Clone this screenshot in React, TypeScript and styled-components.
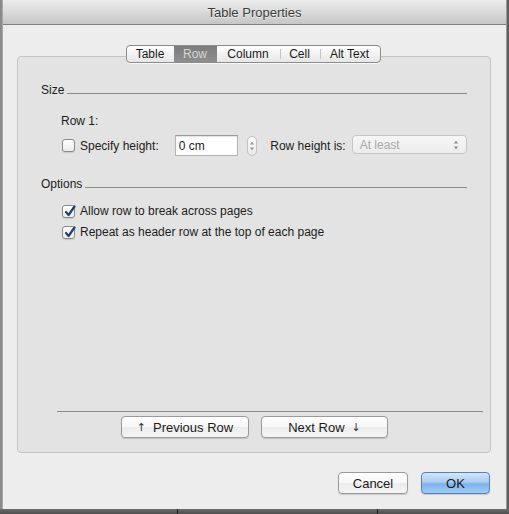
import React from 'react'
import styled, { createGlobalStyle } from 'styled-components'

const GlobalStyle = createGlobalStyle`
  html, body {
    margin: 0;
    padding: 0;
    background: #5e5e5e;
  }
  body {
    font-family: "Liberation Sans", Arial, sans-serif;
    font-size: 12px;
    color: #1c1c1c;
  }
`

const Page = styled.div`
  width: 509px;
  height: 514px;
  display: flex;
  flex-direction: column;
  overflow: hidden;
  background: linear-gradient(to right, #8a8a8a 0 2px, #5e5e5e 2px);
`

const Window = styled.div`
  height: 509px;
  margin: 0 2px 0 2px;
  box-sizing: border-box;
  border-left: 1px solid #a8a8a8;
  border-right: 1px solid #9a9a9a;
  background: #ededed;
  display: flex;
  flex-direction: column;
`

const TitleBar = styled.div`
  height: 24px;
  flex: none;
  border-bottom: 1px solid #7e7e7e;
  border-top-left-radius: 4px;
  border-top-right-radius: 4px;
  background: linear-gradient(#ececec, #d8d8d8 55%, #c6c6c6);
  display: flex;
  align-items: center;
  justify-content: center;
  font-size: 13px;
  color: #3c3c3c;
  text-shadow: 0 1px 0 rgba(255, 255, 255, 0.6);
`

const BottomStrip = styled.div`
  flex: 1;
  background:
    linear-gradient(to right, transparent 177px, #1e1e1e 177px, #1e1e1e 178px, transparent 178px,
      transparent 377px, #1e1e1e 377px, #1e1e1e 378px, transparent 378px),
    linear-gradient(#6c6c6c, #4e4e4e);
`

const Body = styled.div`
  flex: 1;
  display: flex;
  flex-direction: column;
  padding: 0 15px 0 14px;
`

const TabBar = styled.div`
  align-self: center;
  margin-top: 20px;
  margin-bottom: -7px;
  margin-right: 2px;
  position: relative;
  z-index: 1;
  display: flex;
  height: 18px;
  box-sizing: border-box;
  border: 1px solid #8c8c8c;
  border-radius: 4px;
  background: linear-gradient(#ffffff, #f0f0f0 60%, #e6e6e6);
  overflow: hidden;
  box-shadow: 0 1px 0 rgba(255, 255, 255, 0.7);
`

const Tab = styled.div<{ $w: number; $active?: boolean; $first?: boolean }>`
  width: ${(p) => p.$w}px;
  display: flex;
  align-items: center;
  justify-content: center;
  font-size: 12px;
  color: ${(p) => (p.$active ? '#d6d6d6' : '#1a1a1a')};
  background: ${(p) => (p.$active ? 'linear-gradient(#7c7c7c, #8e8e8e)' : 'transparent')};
  position: relative;
  &::before {
    content: '';
    display: ${(p) => (p.$first || p.$active ? 'none' : 'block')};
    position: absolute;
    left: 0;
    top: 3px;
    bottom: 3px;
    width: 1px;
    background: #c4c4c4;
  }
`

const Panel = styled.div`
  height: 397px;
  box-sizing: border-box;
  border: 1px solid #c4c4c4;
  border-radius: 4px;
  background: #e3e3e3;
  display: flex;
  flex-direction: column;
  padding-top: 26px;
`

const Content = styled.div`
  flex: 1;
  display: flex;
  flex-direction: column;
  padding: 0 23px;
`

const SectionHeader = styled.div<{ $gap?: number }>`
  display: flex;
  align-items: flex-end;
  height: 14px;
  margin-top: ${(p) => p.$gap || 0}px;
  line-height: 14px;
`

const SectionRule = styled.div`
  flex: 1;
  height: 1px;
  background: #8a8a8a;
  margin: 0 0 3px 3px;
`

const Indented = styled.div<{ $top: number }>`
  margin-left: 20px;
  margin-top: ${(p) => p.$top}px;
  display: flex;
  align-items: center;
  line-height: 14px;
`

const CheckRow = styled(Indented)`
  height: 16px;
`

const FormRow = styled(Indented)`
  height: 21px;
`

const Box = styled.span`
  position: relative;
  width: 13px;
  height: 13px;
  box-sizing: border-box;
  flex: none;
  border: 1px solid #8a8a8a;
  border-radius: 3px;
  background: linear-gradient(#ffffff, #ececec);
  box-shadow: 0 1px 1px rgba(0, 0, 0, 0.12);
  margin-left: 1px;
  margin-right: 5px;
  svg {
    position: absolute;
    left: 0;
    top: -3px;
  }
`

const Label = styled.span`
  white-space: nowrap;
`

const TextField = styled.div`
  width: 64px;
  height: 21px;
  box-sizing: border-box;
  margin-left: 16px;
  border: 1px solid #b4b4b4;
  border-top-color: #9c9c9c;
  background: #ffffff;
  box-shadow: inset 0 1px 1px rgba(0, 0, 0, 0.12);
  padding-left: 3px;
  display: flex;
  align-items: center;
`

const Stepper = styled.div`
  width: 10px;
  height: 20px;
  box-sizing: border-box;
  margin-left: 9px;
  border: 1px solid #c2c2c2;
  border-radius: 5px;
  background: linear-gradient(#fafafa, #eaeaea);
  display: flex;
  align-items: center;
  justify-content: center;
`

const SideLabel = styled.span`
  margin-left: 13px;
  margin-right: 6px;
  white-space: nowrap;
`

const Select = styled.div`
  width: 116px;
  height: 19px;
  box-sizing: border-box;
  margin-top: -2px;
  border: 1px solid #c6c6c6;
  border-radius: 4px;
  background: linear-gradient(#f6f6f6, #ececec);
  color: #a8a8a8;
  padding: 0 7px 0 7px;
  display: flex;
  align-items: center;
  justify-content: space-between;
`

const Footer = styled.div`
  display: flex;
  flex-direction: column;
  padding-bottom: 14px;
`

const FooterRule = styled.div`
  height: 1px;
  background: #8a8a8a;
  margin: 0 7px 4px 39px;
`

const NavRow = styled.div`
  display: flex;
  justify-content: center;
  gap: 12px;
  margin-left: 1px;
`

const Button = styled.button<{ $w: number; $primary?: boolean }>`
  width: ${(p) => p.$w}px;
  height: 22px;
  box-sizing: border-box;
  padding: 0;
  font-family: inherit;
  font-size: 13px;
  color: #1a1a1a;
  border: 1px solid ${(p) => (p.$primary ? '#5b7fae' : '#9a9a9a')};
  border-radius: 4px;
  background: ${(p) =>
    p.$primary
      ? 'linear-gradient(#d2e6fb, #a9cdf3 45%, #7db3ec 55%, #9ecbf6)'
      : 'linear-gradient(#ffffff, #f7f7f7 50%, #ececec 52%, #f4f4f4)'};
  box-shadow: 0 1px 1px rgba(0, 0, 0, 0.15);
  display: flex;
  align-items: center;
  justify-content: center;
  gap: 7px;
`

const Arrow = styled.span`
  font-family: "DejaVu Sans", sans-serif;
  font-size: 11px;
  color: #333;
`

const Actions = styled.div`
  display: flex;
  justify-content: flex-end;
  gap: 13px;
  margin-top: 19px;
  margin-right: 1px;
`

const Check = () => (
  <svg width="15" height="16" viewBox="0 0 15 16">
    <path d="M3 9 L5.6 12 L11.5 3.5" fill="none" stroke="#20416f" strokeWidth="2.2" strokeLinecap="round" strokeLinejoin="round" />
  </svg>
)

const StepArrows = ({ color }: { color: string }) => (
  <svg width="6" height="12" viewBox="0 0 6 12">
    <path d="M3 1.5 L5 4.5 L1 4.5 Z" fill={color} />
    <path d="M3 10.5 L5 7.5 L1 7.5 Z" fill={color} />
  </svg>
)

const tabs = [
  { name: 'Table', w: 47 },
  { name: 'Row', w: 43, active: true },
  { name: 'Column', w: 63 },
  { name: 'Cell', w: 40 },
  { name: 'Alt Text', w: 60 },
]

export default function App() {
  return (
    <>
      <GlobalStyle />
      <Page>
        <Window>
          <TitleBar>Table Properties</TitleBar>
          <Body>
            <TabBar>
              {tabs.map((t, i) => (
                <Tab key={t.name} $w={t.w} $active={t.active} $first={i === 0 || tabs[i - 1].active}>
                  {t.name}
                </Tab>
              ))}
            </TabBar>
            <Panel>
              <Content>
                <SectionHeader>
                  <Label>Size</Label>
                  <SectionRule />
                </SectionHeader>
                <Indented $top={17}>
                  <Label>Row 1:</Label>
                </Indented>
                <FormRow $top={7}>
                  <Box />
                  <Label>Specify height:</Label>
                  <TextField>0 cm</TextField>
                  <Stepper>
                    <StepArrows color="#9a9a9a" />
                  </Stepper>
                  <SideLabel>Row height is:</SideLabel>
                  <Select>
                    <span>At least</span>
                    <StepArrows color="#8a8a8a" />
                  </Select>
                </FormRow>
                <SectionHeader $gap={21}>
                  <Label>Options</Label>
                  <SectionRule />
                </SectionHeader>
                <CheckRow $top={12}>
                  <Box>
                    <Check />
                  </Box>
                  <Label>Allow row to break across pages</Label>
                </CheckRow>
                <CheckRow $top={5}>
                  <Box>
                    <Check />
                  </Box>
                  <Label>Repeat as header row at the top of each page</Label>
                </CheckRow>
              </Content>
              <Footer>
                <FooterRule />
                <NavRow>
                  <Button $w={128}>
                    <Arrow>↑</Arrow>
                    Previous Row
                  </Button>
                  <Button $w={127}>
                    Next Row
                    <Arrow>↓</Arrow>
                  </Button>
                </NavRow>
              </Footer>
            </Panel>
            <Actions>
              <Button $w={70}>Cancel</Button>
              <Button $w={69} $primary>
                OK
              </Button>
            </Actions>
          </Body>
        </Window>
        <BottomStrip />
      </Page>
    </>
  )
}
